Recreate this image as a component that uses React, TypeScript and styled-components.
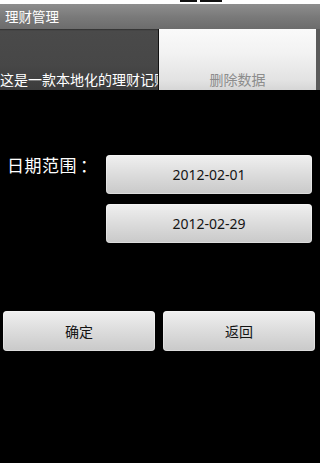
import styled, { createGlobalStyle } from 'styled-components';

const GlobalStyle = createGlobalStyle`
  html, body {
    margin: 0;
    padding: 0;
    background: #000;
  }
  body {
    font-family: 'Noto Sans', 'Noto Sans CJK SC', sans-serif;
  }
`;

const Screen = styled.div`
  width: 320px;
  height: 463px;
  background: #000;
  display: flex;
  flex-direction: column;
  overflow: hidden;
`;

const StatusStrip = styled.div`
  height: 4px;
  background: #fff;
  display: flex;
  gap: 3px;
  padding-left: 180px;
`;

const StatusMark = styled.div<{ $w: number }>`
  width: ${(p) => p.$w}px;
  height: 2px;
  background: #111;
`;

const TitleBar = styled.div`
  height: 25px;
  background: linear-gradient(#8e8e8e, #7a7a7a 50%, #6c6c6c);
  color: #fff;
  font-size: 13.5px;
  line-height: 25px;
  padding-left: 5px;
  font-family: 'Noto Sans CJK SC', sans-serif;
`;

const Tabs = styled.div`
  height: 61px;
  display: flex;
  background: #5a5a5a;
`;

const Tab = styled.div<{ $active?: boolean }>`
  width: ${(p) => (p.$active ? '159px' : '157px')};
  display: flex;
  align-items: flex-end;
  justify-content: ${(p) => (p.$active ? 'flex-start' : 'center')};
  padding-bottom: 0;
  box-sizing: border-box;
  overflow: hidden;
  white-space: nowrap;
  font-family: 'Noto Sans CJK SC', sans-serif;
  font-size: 14px;
  line-height: 22px;
  color: ${(p) => (p.$active ? '#fff' : '#8c8c8c')};
  background: ${(p) =>
    p.$active
      ? 'linear-gradient(#2e2e2e, #4a4a4a 3%, #474747 60%, #3c3c3c)'
      : 'linear-gradient(#fafafa, #f2f2f2 40%, #e2e2e2 85%, #d6d6d6)'};
  border-right: ${(p) => (p.$active ? '1px solid #111' : 'none')};
  margin-right: ${(p) => (p.$active ? '0' : '3px')};
`;

const Content = styled.div`
  display: flex;
  flex-direction: column;
  padding-top: 65px;
`;

const DateRow = styled.div`
  display: flex;
  padding-left: 7px;
`;

const DateLabel = styled.div`
  width: 99px;
  color: #fff;
  font-size: 17px;
  letter-spacing: 0.5px;
  line-height: 20px;
  font-family: 'Noto Sans CJK SC', sans-serif;
  white-space: nowrap;
`;

const Colon = styled.span`
  margin-left: 3px;
`;

const DateColumn = styled.div`
  display: flex;
  flex-direction: column;
  gap: 10px;
`;

const GrayButton = styled.button<{ $w: number }>`
  width: ${(p) => p.$w}px;
  height: ${(p) => (p.$w > 160 ? 39 : 40)}px;
  border: none;
  border-radius: 4px;
  padding: 0;
  background: linear-gradient(#f0f0f0, #dcdcdc 50%, #c9c9c9);
  color: #141414;
  font-size: 14px;
  font-family: 'Noto Sans', 'Noto Sans CJK SC', sans-serif;
  box-shadow: inset 0 0 0 1px rgba(255, 255, 255, 0.35);
`;

const ActionRow = styled.div`
  display: flex;
  gap: 8px;
  padding-left: 3px;
  margin-top: 68px;
`;

export default function App() {
  return (
    <Screen>
      <GlobalStyle />
      <StatusStrip>
        <StatusMark $w={17} />
        <StatusMark $w={22} />
      </StatusStrip>
      <TitleBar>理财管理</TitleBar>
      <Tabs>
        <Tab $active>这是一款本地化的理财记账软件</Tab>
        <Tab>删除数据</Tab>
      </Tabs>
      <Content>
        <DateRow>
          <DateLabel>
            日期范围<Colon>：</Colon>
          </DateLabel>
          <DateColumn>
            <GrayButton $w={206}>2012-02-01</GrayButton>
            <GrayButton $w={206}>2012-02-29</GrayButton>
          </DateColumn>
        </DateRow>
        <ActionRow>
          <GrayButton $w={152}>确定</GrayButton>
          <GrayButton $w={152}>返回</GrayButton>
        </ActionRow>
      </Content>
    </Screen>
  );
}
